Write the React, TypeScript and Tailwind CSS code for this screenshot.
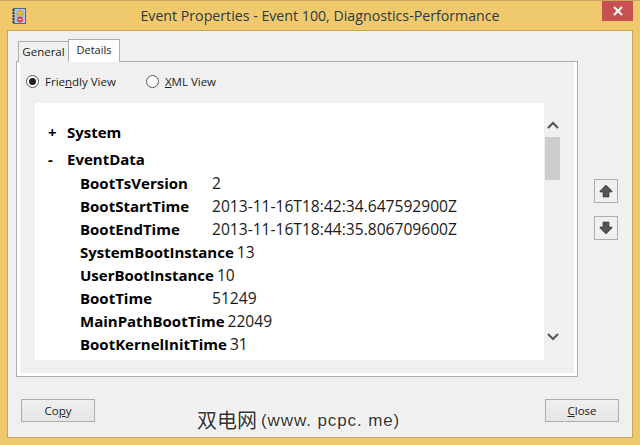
const rows: [string, string][] = [
  ["BootTsVersion", "2"],
  ["BootStartTime", "2013-11-16T18:42:34.647592900Z"],
  ["BootEndTime", "2013-11-16T18:44:35.806709600Z"],
  ["SystemBootInstance", "13"],
  ["UserBootInstance", "10"],
  ["BootTime", "51249"],
  ["MainPathBootTime", "22049"],
  ["BootKernelInitTime", "31"],
];

function ArrowButton({ down }: { down?: boolean }) {
  return (
    <div className="w-6 h-6 border border-[#adadad] bg-[#f0f0f0] flex items-center justify-center">
      <svg width="14" height="14" viewBox="0 0 14 14" className={down ? "rotate-180" : ""}>
        <path d="M7 1 L13 7 L13 8 L10 8 L10 13 L4 13 L4 8 L1 8 L1 7 Z" fill="#555" stroke="#333" strokeWidth="0.6" />
      </svg>
    </div>
  );
}

function Row({ k, v }: { k: string; v: string }) {
  return (
    <div className="flex h-[23px] items-center pl-[45px] whitespace-nowrap">
      <span className="min-w-[132px] pr-[3px] shrink-0 font-bold text-[15px] text-black">{k}</span>
      <span className="text-[15.6px] text-[#1a1a1a]">{v}</span>
    </div>
  );
}

export default function App() {
  return (
    <div
      className="relative w-[640px] h-[445px] overflow-hidden bg-[#f0c96c] flex flex-col text-[11.5px] text-[#222]"
      style={{ fontFamily: '"Open Sans", "Noto Sans", sans-serif' }}
    >
      {/* Title bar */}
      <div className="h-[30px] shrink-0 flex items-center relative border-t border-[#c9a860]">
        <svg width="16" height="18" viewBox="0 0 16 18" className="absolute left-[11px] top-[6px]">
          <rect x="2.5" y="1.5" width="12" height="15" fill="#b9c8e6" stroke="#4f6596" />
          <path d="M4 4h9M4 7h9M4 10h9M4 13h9" stroke="#93a6cc" />
          <path d="M1 3h3M1 6h3M1 9h3M1 12h3M1 15h3" stroke="#333" />
          <path d="M9 2.5 L12.5 8 L5.5 8 Z" fill="#f1c40f" stroke="#a38300" strokeWidth="0.5" />
          <circle cx="9" cy="12.5" r="3" fill="#d9433f" />
          <rect x="7.5" y="12" width="3" height="1" fill="#fff" />
        </svg>
        <div className="w-full text-center text-[14.2px] text-[#2b3a42]">
          Event Properties - Event 100, Diagnostics-Performance
        </div>
        <div className="absolute left-[602px] top-0 w-[31px] h-[20px] bg-[#c75050] flex items-center justify-center">
          <svg width="10" height="10" viewBox="0 0 10 10">
            <path d="M1 1 L9 9 M9 1 L1 9" stroke="#fff" strokeWidth="2" />
          </svg>
        </div>
      </div>

      {/* Client area */}
      <div className="ml-[7px] mr-[7px] h-[408px] bg-[#f0f0f0] border border-[#c4a55c] flex flex-col pt-[8px] pl-[8px] relative">
        {/* Tabs */}
        <div className="flex items-end h-[23px] pl-[2px] relative z-10">
          <div className="w-[51px] h-[21px] border border-[#adadad] border-b-0 bg-[#f0f0f0] flex items-center justify-center">
            General
          </div>
          <div className="w-[52px] h-[23px] -ml-px border border-[#adadad] border-b-0 bg-white flex items-start justify-center pt-[2px] text-[11px]">
            Details
          </div>
        </div>

        <div className="flex">
          {/* Panel */}
          <div className="w-[562px] h-[316px] -mt-px border border-[#adadad] bg-[#f0f0f0] flex flex-col">
            <div className="flex-1 border-l-[3px] border-r-[3px] border-b-[3px] border-white flex flex-col min-h-0">
              {/* Radios */}
              <div className="h-[39px] mb-[2px] flex items-center pl-[6px] shrink-0">
                <div className="w-[13px] h-[13px] rounded-full border border-[#555] bg-white flex items-center justify-center">
                  <div className="w-[7px] h-[7px] rounded-full bg-[#222]" />
                </div>
                <span className="ml-[6px]">
                  Frie<span className="underline">n</span>dly View
                </span>
                <div className="ml-[30px] w-[13px] h-[13px] rounded-full border border-[#555] bg-white" />
                <span className="ml-[6px]">
                  <span className="underline">X</span>ML View
                </span>
              </div>
              {/* Viewer */}
              <div className="flex pl-[15px] h-[257px]">
                <div className="w-[509px] h-full bg-white pt-[17px] overflow-hidden">
                  <div className="flex h-[25px] items-center font-bold text-[15px] text-black">
                    <span className="w-[32px] pl-[13px]">+</span>
                    <span>System</span>
                  </div>
                  <div className="flex h-[27px] pt-[2px] items-center font-bold text-[15px] text-black">
                    <span className="w-[32px] pl-[13px]">-</span>
                    <span>EventData</span>
                  </div>
                  {rows.map(([k, v]) => (
                    <Row key={k} k={k} v={v} />
                  ))}
                </div>
                {/* Scrollbar */}
                <div className="ml-px w-[15px] h-full flex flex-col items-center">
                  <div className="h-[34px] w-full flex items-center justify-center pt-[10px]">
                    <svg width="12" height="8" viewBox="0 0 12 8">
                      <path d="M1 7 L6 2 L11 7" fill="none" stroke="#555" strokeWidth="2" />
                    </svg>
                  </div>
                  <div className="w-full h-[43px] bg-[#cdcdcd]" />
                  <div className="flex-1" />
                  <div className="h-[34px] w-full flex items-start justify-center pt-[7px]">
                    <svg width="12" height="8" viewBox="0 0 12 8">
                      <path d="M1 1 L6 6 L11 1" fill="none" stroke="#555" strokeWidth="2" />
                    </svg>
                  </div>
                </div>
              </div>
            </div>
          </div>
          {/* Arrow buttons */}
          <div className="ml-[16px] pt-[117px] flex flex-col gap-[13px]">
            <ArrowButton />
            <ArrowButton down />
          </div>
        </div>

        {/* Footer */}
        <div className="flex justify-between -mt-[1px] pt-[23px] pl-[5px] pr-[13px]">
          <div className="w-[74px] h-[23px] border border-[#adadad] bg-gradient-to-b from-[#f0f0f0] to-[#e5e5e5] flex items-center justify-center">
            Co<span className="underline">p</span>y
          </div>
          <div className="w-[74px] h-[23px] border border-[#adadad] bg-gradient-to-b from-[#f0f0f0] to-[#e5e5e5] flex items-center justify-center">
            <span className="underline">C</span>lose
          </div>
        </div>
      </div>

      {/* Watermark over the dialog */}
      <div
        className="absolute left-[197px] top-[408px] h-[26px] flex items-center whitespace-nowrap text-[20px] text-[#333]"
        style={{
          fontFamily: '"Liberation Sans", "Noto Sans CJK SC", sans-serif',
          textShadow: "0 0 2px #fff, 0 0 2px #fff, 0 0 3px #fff, 0 0 3px #fff",
        }}
      >
        双电网<span className="ml-[4px] text-[17px] tracking-[0.9px]">(www. pcpc. me)</span>
      </div>
    </div>
  );
}
